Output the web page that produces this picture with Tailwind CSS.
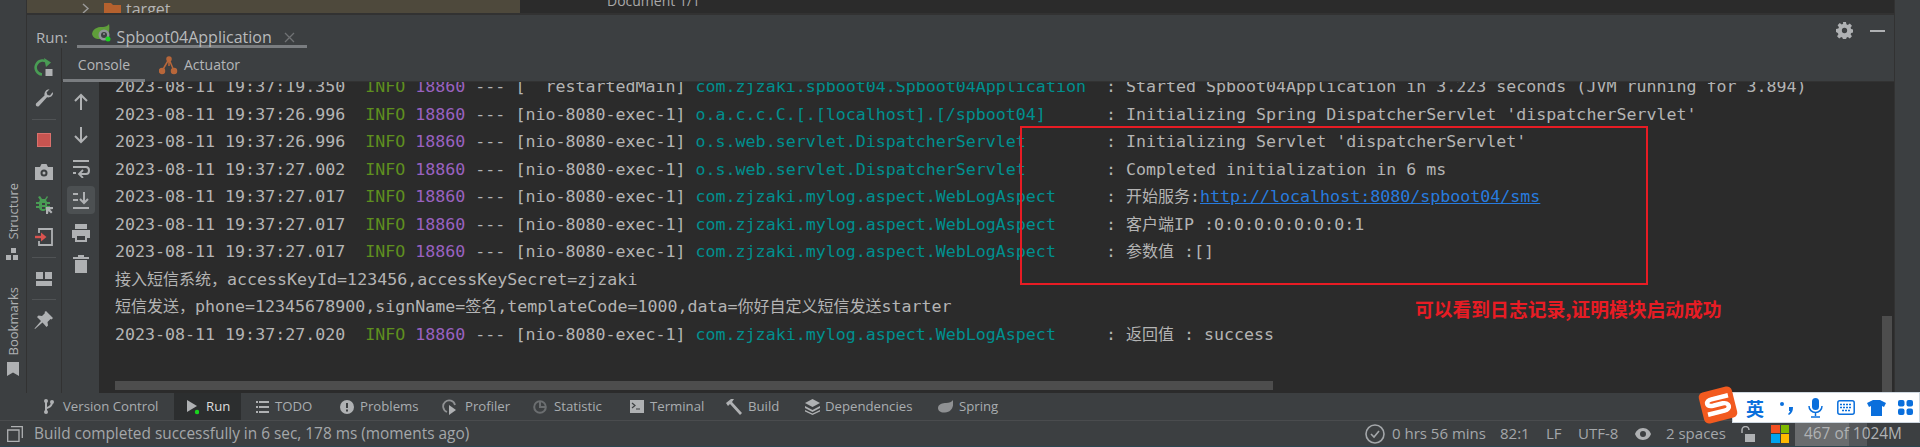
<!DOCTYPE html>
<html lang="zh-CN">
<head>
<meta charset="utf-8">
<title>Spboot04Application</title>
<script src="https://cdn.jsdelivr.net/npm/@tailwindcss/browser@4"></script>
</head>
<body class="m-0 bg-[#3c3f41]">
<div class="relative w-[1920px] h-[447px] overflow-hidden bg-[#3c3f41] flex flex-col font-['Open_Sans','Noto_Sans_CJK_SC',sans-serif] text-[#afb1b3]">

  <!-- upper workspace -->
  <div class="flex h-[393px] shrink-0">
    <!-- left strip -->
    <div class="w-[27px] shrink-0 border-r border-[#323232] flex flex-col items-center">
      <div class="h-[183px] shrink-0"></div>
      <div class="h-[57px] w-[20px] flex items-center justify-center"><span class="[writing-mode:vertical-rl] rotate-180 text-[13px] leading-[20px] whitespace-nowrap">Structure</span></div>
      <svg class="mt-[8px]" width="14" height="12" viewBox="0 0 14 12" fill="#afb1b3"><rect x="5" y="0" width="5" height="5"/><rect x="0" y="7" width="5" height="5"/><rect x="7" y="7" width="5" height="5"/></svg>
      <div class="mt-[28px] h-[67px] w-[20px] flex items-center justify-center"><span class="[writing-mode:vertical-rl] rotate-180 text-[13px] leading-[20px] whitespace-nowrap">Bookmarks</span></div>
      <svg class="mt-[7px]" width="12" height="14" viewBox="0 0 12 14" fill="#afb1b3"><path d="M0 0h12v14L6 10.5 0 14z"/></svg>
    </div>

    <!-- main column -->
    <div class="flex-1 min-w-0 flex flex-col">
      <!-- top clipped row -->
      <div class="h-[13px] shrink-0 flex overflow-hidden text-[15px] leading-[18px]">
        <div class="w-[493px] bg-[#4e493c] flex items-start">
          <svg class="ml-[54px] mt-[3px]" width="9" height="11" viewBox="0 0 9 11" fill="none" stroke="#9a9a9a" stroke-width="1.4"><path d="M2 1l5 4.5L2 10"/></svg>
          <svg class="ml-[14px] mt-[3px]" width="17" height="12" viewBox="0 0 17 12" fill="#b5612e"><path d="M0 0h7l2 2h8v10H0z"/></svg>
          <span class="ml-[5px] text-[#b5b5b5] text-[16px]">target</span>
        </div>
        <div class="flex-1 bg-[#2b2b2b] relative">
          <span class="block ml-[87px] -mt-[8px] text-[#a9a9a9] text-[14px] whitespace-nowrap">Document 1/1</span>
        </div>
      </div>
      <div class="h-[2px] shrink-0 bg-[#323232]"></div>

      <!-- Run header -->
      <div class="h-[33px] shrink-0 flex items-start relative">
        <span class="ml-[9px] mt-[12px] text-[15px] leading-[20px] text-[#b4b6b8]">Run:</span>
        <div class="ml-[9px] w-[230px] h-[33px] border-b-[3px] border-[#7a7d80] flex items-start">
          <svg class="ml-[15px] mt-[8px]" width="19" height="19" viewBox="0 0 19 19">
            <path d="M0 11C1 4 8 4 11 4c2 0 5-1 6-3 1 5 0 10-3 13-3 2-5 2-7 2-3 0-6-1-7-5z" fill="#5f9e3a"/>
            <circle cx="12" cy="12" r="5.5" fill="#8f9497"/><circle cx="12" cy="12" r="3" fill="#3c3f41"/>
            <path d="M12 10v2" stroke="#afb1b3" stroke-width="1"/>
            <circle cx="16" cy="16" r="2.5" fill="#19d31e"/>
          </svg>
          <span class="ml-[6px] mt-[12px] w-[158px] text-[16px] leading-[20px] whitespace-nowrap text-[#b8babc]">Spboot04Application</span>
          <svg class="ml-[9px] mt-[17px]" width="11" height="11" viewBox="0 0 11 11" stroke="#707274" stroke-width="1.3"><path d="M1 1l9 9M10 1l-9 9"/></svg>
        </div>
        <div class="ml-auto mt-[7px] flex items-center">
          <svg width="17" height="17" viewBox="0 0 16 16" fill="#afb1b3"><path fill-rule="evenodd" d="M6.6 0h2.8l.4 2.2 1.3.6 1.9-1.3 2 2-1.3 1.900.6 1.300 2.200.4v2.800l-2.200.4-.6 1.300 1.300 1.900-2 2-1.900-1.300-1.300.6-.4 2.200H6.600l-.4-2.200-1.300-.6L3 15.500l-2-2 1.300-1.900-.6-1.300L0 9.400V6.600l2.200-.4.6-1.300L1.500 3l2-2 1.900 1.300 1.300-.6zM8 5.500a2.500 2.500 0 100 5 2.500 2.500 0 000-5z"/></svg>
          <div class="ml-[17px] mr-[9px] w-[15px] h-[2px] bg-[#afb1b3]"></div>
        </div>
      </div>

      <!-- body -->
      <div class="flex-1 min-h-0 flex">
        <!-- action col 1 -->
        <div class="w-[35px] shrink-0 border-r border-[#323232] flex flex-col items-center">
          <svg class="mt-[9px]" width="20" height="20" viewBox="0 0 20 20" fill="none"><path d="M8 17.500A7 7 0 1 1 14 6" stroke="#499c54" stroke-width="2.600"/><path d="M10 1l7 4.500-5 4.500z" fill="#499c54"/><rect x="11.500" y="12" width="7" height="7" fill="#afb1b3"/></svg>
          <svg class="mt-[11px]" width="20" height="20" viewBox="0 0 20 20" fill="#afb1b3"><path d="M19 5c0 3-3 5-6 4.300L5 18c-1.500 1.500-4 0-3-2.500l8.500-8C10 4 12.500 1 15.500 1.200L12.500 4.500l1 2.500 2.500.5L18.500 4.300z"/></svg>
          <div class="mt-[11px] w-[24px] h-px bg-[#505355]"></div>
          <div class="mt-[10px] h-[20px] flex items-center"><div class="w-[14px] h-[14px] bg-[#c75450] border border-[#d9716d]"></div></div>
          <svg class="mt-[12px]" width="20" height="20" viewBox="0 0 20 20" fill="#afb1b3"><path fill-rule="evenodd" d="M1 5h5l1.500-3h5L14 5h5v13H1zM10 7.500a3.500 3.500 0 100 7 3.500 3.500 0 000-7zM10 9.500a1.500 1.500 0 110 3 1.500 1.500 0 010-3z"/></svg>
          <svg class="mt-[13px]" width="20" height="20" viewBox="0 0 20 20"><path fill="#499c54" d="M6 1l2 3h3l2-3 1 1-2 3 1 2h3v2h-3v2h3v2h-3l-1 2-2 1-2 0-2-1-1-2H2v-2h3V9H2V7h3l1-2-2-3z"/><path fill="#3c3f41" d="M8 8h3v2H8zM8 12h3v2H8z"/><path fill="#afb1b3" d="M12 12h7v2l-3 .5 2.500 2.500-1.500 1.500-2.500-2.500-.5 3h-2z"/></svg>
          <svg class="mt-[12px]" width="20" height="20" viewBox="0 0 20 20" fill="none"><path d="M5 6V2h13v16H5v-4" stroke="#afb1b3" stroke-width="1.800"/><path d="M1 10h8" stroke="#d9534f" stroke-width="2.400"/><path d="M7 5.500l5.500 4.500L7 14.500z" fill="#d9534f"/></svg>
          <div class="mt-[10px] w-[24px] h-px bg-[#505355]"></div>
          <svg class="mt-[11px]" width="20" height="20" viewBox="0 0 20 20" fill="#afb1b3"><path d="M2 3h7v7H2zM11 3h7v7h-7zM2 12h16v5H2z"/></svg>
          <div class="mt-[10px] w-[24px] h-px bg-[#505355]"></div>
          <svg class="mt-[10px]" width="20" height="20" viewBox="0 0 20 20" fill="#afb1b3"><path d="M12 1l7 7-1.500 1.500-1-.5-3 3 .5 3.500L12.500 17 8.500 12.500 1 19l-.5-.5L7 11 3 7l1.500-1.500L8 6l3-3-.5-1z"/></svg>
        </div>

        <!-- right of col 1 -->
        <div class="flex-1 min-w-0 flex flex-col">
          <!-- console tabs -->
          <div class="h-[34px] shrink-0 flex items-start border-b border-[#323232] relative">
            <div class="ml-[1px] w-[82px] h-[34px] border-b-[3px] border-[#7a7d80] flex justify-center"><span class="mt-[7px] text-[14px] leading-[20px] text-[#b4b6b8]">Console</span></div>
            <svg class="ml-[14px] mt-[8px]" width="19" height="19" viewBox="0 0 19 19" fill="#b8673a" stroke="#b8673a" stroke-width="1.500"><path d="M10 3L3 15M10 3l5 12M10 3v7" fill="none"/><circle cx="10" cy="3" r="2" /><circle cx="3" cy="15" r="2.500"/><circle cx="15" cy="15" r="2.500"/></svg>
            <span class="ml-[6px] mt-[7px] text-[14px] leading-[20px] text-[#b4b6b8]">Actuator</span>
          </div>

          <div class="flex-1 min-h-0 flex">
            <!-- action col 2 -->
            <div class="w-[37px] shrink-0 flex flex-col items-center">
              <svg class="mt-[10px]" width="20" height="20" viewBox="0 0 20 20" fill="none" stroke="#afb1b3" stroke-width="2"><path d="M10 18V3M4 9l6-6 6 6"/></svg>
              <svg class="mt-[13px]" width="20" height="20" viewBox="0 0 20 20" fill="none" stroke="#afb1b3" stroke-width="2"><path d="M10 2v15M4 11l6 6 6-6"/></svg>
              <svg class="mt-[13px]" width="20" height="20" viewBox="0 0 20 20" fill="none" stroke="#afb1b3" stroke-width="2"><path d="M2 3h16M2 9h13c4 0 4 7 0 7H9M2 15h3"/><path d="M12 12l-4 4 4 4" stroke-width="1.800"/></svg>
              <div class="mt-[8px] w-[28px] h-[28px] rounded-[4px] bg-[#4c5052] flex items-center justify-center">
                <svg width="20" height="20" viewBox="0 0 20 20" fill="none" stroke="#afb1b3" stroke-width="2"><path d="M2 4h5M2 10h5M2 18h16M13 2v11M9 9l4 4 4-4"/></svg>
              </div>
              <svg class="mt-[9px]" width="20" height="20" viewBox="0 0 20 20" fill="#afb1b3"><path fill-rule="evenodd" d="M4 1h12v5H4zM1 7h18v8h-3v4H4v-4H1zM6 13v4h8v-4z"/></svg>
              <svg class="mt-[11px]" width="20" height="20" viewBox="0 0 20 20" fill="#afb1b3"><path d="M7 1h6v2h5v2H2V3h5zM4 6h12v13H4z"/></svg>
            </div>

            <!-- console -->
            <div class="flex-1 min-w-0 relative bg-[#2b2b2b] overflow-hidden">
              <div class="ml-[16px] -mt-[9px] font-['DejaVu_Sans_Mono','Noto_Sans_CJK_SC',monospace] text-[16.64px] text-[#b4b4b4]">
                <div class="h-[27.5px] leading-[27.5px] whitespace-pre">2023-08-11 19:37:19.350  <span class="text-[#5f8f1f]">INFO</span> <span class="text-[#9a62c0]">18860</span> --- [  restartedMain] <span class="text-[#00908f]">com.zjzaki.spboot04.Spboot04Application</span>  : Started Spboot04Application in 3.223 seconds (JVM running for 3.894)</div>
                <div class="h-[27.5px] leading-[27.5px] whitespace-pre">2023-08-11 19:37:26.996  <span class="text-[#5f8f1f]">INFO</span> <span class="text-[#9a62c0]">18860</span> --- [nio-8080-exec-1] <span class="text-[#00908f]">o.a.c.c.C.[.[localhost].[/spboot04]</span>      : Initializing Spring DispatcherServlet 'dispatcherServlet'</div>
                <div class="h-[27.5px] leading-[27.5px] whitespace-pre">2023-08-11 19:37:26.996  <span class="text-[#5f8f1f]">INFO</span> <span class="text-[#9a62c0]">18860</span> --- [nio-8080-exec-1] <span class="text-[#00908f]">o.s.web.servlet.DispatcherServlet</span>        : Initializing Servlet 'dispatcherServlet'</div>
                <div class="h-[27.5px] leading-[27.5px] whitespace-pre">2023-08-11 19:37:27.002  <span class="text-[#5f8f1f]">INFO</span> <span class="text-[#9a62c0]">18860</span> --- [nio-8080-exec-1] <span class="text-[#00908f]">o.s.web.servlet.DispatcherServlet</span>        : Completed initialization in 6 ms</div>
                <div class="h-[27.5px] leading-[27.5px] whitespace-pre">2023-08-11 19:37:27.017  <span class="text-[#5f8f1f]">INFO</span> <span class="text-[#9a62c0]">18860</span> --- [nio-8080-exec-1] <span class="text-[#00908f]">com.zjzaki.mylog.aspect.WebLogAspect</span>     : <span class="text-[16px]">开始服务</span>:<span class="text-[#287bde] underline">http://localhost:8080/spboot04/sms</span></div>
                <div class="h-[27.5px] leading-[27.5px] whitespace-pre">2023-08-11 19:37:27.017  <span class="text-[#5f8f1f]">INFO</span> <span class="text-[#9a62c0]">18860</span> --- [nio-8080-exec-1] <span class="text-[#00908f]">com.zjzaki.mylog.aspect.WebLogAspect</span>     : <span class="text-[16px]">客户端</span>IP :0:0:0:0:0:0:0:1</div>
                <div class="h-[27.5px] leading-[27.5px] whitespace-pre">2023-08-11 19:37:27.017  <span class="text-[#5f8f1f]">INFO</span> <span class="text-[#9a62c0]">18860</span> --- [nio-8080-exec-1] <span class="text-[#00908f]">com.zjzaki.mylog.aspect.WebLogAspect</span>     : <span class="text-[16px]">参数值</span> :[]</div>
                <div class="h-[27.5px] leading-[27.5px] whitespace-pre"><span class="text-[16px]">接入短信系统，</span>accessKeyId=123456,accessKeySecret=zjzaki</div>
                <div class="h-[27.5px] leading-[27.5px] whitespace-pre"><span class="text-[16px]">短信发送，</span>phone=12345678900,signName=<span class="text-[16px]">签名</span>,templateCode=1000,data=<span class="text-[16px]">你好自定义短信发送</span>starter</div>
                <div class="h-[27.5px] leading-[27.5px] whitespace-pre">2023-08-11 19:37:27.020  <span class="text-[#5f8f1f]">INFO</span> <span class="text-[#9a62c0]">18860</span> --- [nio-8080-exec-1] <span class="text-[#00908f]">com.zjzaki.mylog.aspect.WebLogAspect</span>     : <span class="text-[16px]">返回值</span> : success</div>
              </div>
              <!-- scrollbars -->
              <div class="absolute left-[16px] top-[299px] w-[1158px] h-[9px] bg-[#4d4d4d]"></div>
              <div class="absolute right-[2px] top-[234px] w-[10px] h-[77px] bg-[#4d4d4d]"></div>
            </div>
          </div>
        </div>
      </div>
    </div>

    <!-- right strip -->
    <div class="w-[26px] shrink-0 border-l border-[#323232]"></div>
  </div>

  <!-- tool window bar -->
  <div class="h-[28px] shrink-0 flex items-stretch border-b border-[#4a4c4e] text-[13.2px] text-[#a9adb0] whitespace-nowrap">
    <div class="ml-[44px] flex items-center"><svg width="10" height="15" viewBox="0 0 10 15" fill="#afb1b3"><circle cx="2" cy="2" r="2"/><circle cx="8" cy="3" r="2"/><circle cx="2" cy="13" r="2"/><path d="M1 2h2v11H1z"/><path d="M7 3h2c0 4-3 6-6 7V8c2-1 4-2 4-5z"/></svg><span class="ml-[9px] w-[96px]">Version Control</span></div>
    <div class="ml-[15px] w-[67px] bg-[#2c2e2f] flex items-center pl-[13px] text-[#dcdcdc]"><svg width="12" height="16" viewBox="0 0 12 16"><path d="M0 1l10 6-10 6z" fill="#afb1b3"/><circle cx="10" cy="13" r="2.200" fill="#19d31e"/></svg><span class="ml-[7px]">Run</span></div>
    <div class="ml-[15px] flex items-center"><svg width="13" height="12" viewBox="0 0 13 12" fill="#afb1b3"><path d="M0 0h2v2H0zM3 0h10v2H3zM0 5h2v2H0zM3 5h10v2H3zM0 10h2v2H0zM3 10h10v2H3z"/></svg><span class="ml-[6px] w-[38px]">TODO</span></div>
    <div class="ml-[27px] flex items-center"><svg width="14" height="14" viewBox="0 0 14 14"><circle cx="7" cy="7" r="7" fill="#afb1b3"/><path d="M6 3h2v5H6zM6 9.500h2v2H6z" fill="#3c3f41"/></svg><span class="ml-[6px] w-[57px]">Problems</span></div>
    <div class="ml-[25px] flex items-center"><svg width="15" height="16" viewBox="0 0 15 16" fill="none"><path d="M5 13A6 6 0 1 1 13 6" stroke="#8f9193" stroke-width="1.800"/><path d="M7 6l7 5-7 5z" fill="#afb1b3"/></svg><span class="ml-[8px] w-[43px]">Profiler</span></div>
    <div class="ml-[25px] flex items-center"><svg width="14" height="14" viewBox="0 0 14 14" fill="none" stroke="#6b6e70" stroke-width="2"><circle cx="7" cy="7" r="5.800"/><path d="M7 1v6h6"/></svg><span class="ml-[7px] w-[49px]">Statistic</span></div>
    <div class="ml-[27px] flex items-center"><svg width="14" height="13" viewBox="0 0 14 13"><rect width="14" height="13" fill="#afb1b3"/><path d="M2 3l3 2.500L2 8M6 9h4" stroke="#3c3f41" fill="none" stroke-width="1.200"/></svg><span class="ml-[6px] w-[52px]">Terminal</span></div>
    <div class="ml-[24px] flex items-center"><svg width="16" height="16" viewBox="0 0 16 16" fill="#afb1b3"><path d="M0 4l5-4h3L6 3l10 11-2 2L4 5 2 7z"/></svg><span class="ml-[6px] w-[30px]">Build</span></div>
    <div class="ml-[27px] flex items-center"><svg width="15" height="16" viewBox="0 0 15 16" fill="#afb1b3"><path d="M7.500 0L15 4l-7.500 4L0 4z"/><path d="M0 7l7.500 4L15 7v2l-7.500 4L0 9zM0 11l7.500 3.500L15 11v1.500L7.500 16 0 12.500z"/></svg><span class="ml-[5px] w-[86px]">Dependencies</span></div>
    <div class="ml-[27px] flex items-center"><svg width="15" height="13" viewBox="0 0 15 13" fill="#8f9193"><path d="M15 0c1 6-1 12-8 12.500C3 13 0 11 0 8c0-4 5-5 8-5 3 0 6-1 7-3z"/></svg><span class="ml-[6px] w-[40px]">Spring</span></div>
  </div>

  <!-- status bar -->
  <div class="flex-1 flex items-center border-b border-[#2a4650] text-[15.4px] text-[#a4a7aa] whitespace-nowrap">
    <svg class="ml-[7px]" width="16" height="16" viewBox="0 0 16 16" fill="none" stroke="#afb1b3" stroke-width="1.300"><path d="M4 .7h11.300V12M.7 4h11.300v11.300H.7z"/></svg>
    <span class="ml-[11px] w-[441px] text-[#a4a7aa]">Build completed successfully in 6 sec, 178 ms (moments ago)</span>
    <div class="ml-auto flex items-center h-full">
      <svg width="20" height="20" viewBox="0 0 20 20" fill="none" stroke="#a4a7aa" stroke-width="1.600"><circle cx="10" cy="10" r="9"/><path d="M6 10l3 3 5-6"/></svg>
      <span class="ml-[7px] w-[95px] text-[15px]">0 hrs 56 mins</span>
      <span class="ml-[13px] w-[29px] text-[15px]">82:1</span>
      <span class="ml-[17px] w-[16px] text-[15px]">LF</span>
      <span class="ml-[16px] w-[42px] text-[15px]">UTF-8</span>
      <svg class="ml-[15px]" width="16" height="12" viewBox="0 0 16 12"><path fill-rule="evenodd" fill="#afb1b3" d="M8 0c4 0 7 3 8 6-1 3-4 6-8 6S1 9 0 6c1-3 4-6 8-6zm0 3a3 3 0 100 6 3 3 0 000-6z"/></svg>
      <span class="ml-[15px] w-[61px] text-[15px]">2 spaces</span>
      <svg class="ml-[14px]" width="14" height="16" viewBox="0 0 14 16" fill="none"><path d="M1 7V4a3.500 3.500 0 017 0" stroke="#afb1b3" stroke-width="1.500"/><rect x="4" y="8" width="10" height="8" fill="#afb1b3"/></svg>
      <div class="ml-[16px] w-[18px] h-[18px] grid grid-cols-2 gap-px"><div class="bg-[#f25022]"></div><div class="bg-[#7fba00]"></div><div class="bg-[#00a4ef]"></div><div class="bg-[#ffb900]"></div></div>
      <div class="relative ml-[6px] w-[125px] h-full flex">
        <div class="w-[54px] bg-[#6a6c6e]"></div>
        <div class="w-[18px] bg-[#54575a]"></div>
        <span class="absolute left-[9px] inset-y-0 flex items-center text-[#b0b2b4]">467 of 1024M</span>
      </div>
    </div>
  </div>

  <!-- annotation overlay -->
  <div class="absolute left-[1020px] top-[126px] w-[628px] h-[159px] border-2 border-[#e81c24]"></div>
  <div class="absolute left-[1415px] top-[296px] text-[18.8px] leading-[26px] font-bold text-[#e81c24] whitespace-nowrap font-['Noto_Sans_CJK_SC',sans-serif]">可以看到日志记录,证明模块启动成功</div>

  <!-- IME overlay -->
  <div class="absolute left-[1732px] top-[392px] w-[188px] h-[31px] bg-white border border-[#cfd8e0] flex items-center text-[#0a6fdc]">
    <span class="ml-[13px] w-[18px] text-[18px] leading-[20px] font-bold font-['Noto_Sans_CJK_SC',sans-serif]">英</span>
    <span class="ml-[16px] w-[14px] flex items-center"><svg width="14" height="16" viewBox="0 0 14 16" fill="#0a6fdc"><circle cx="2" cy="4" r="2"/><path d="M9 7h4c0 4-1 6-4 8l-1-1c1-1 2-2 2-3H9z"/></svg></span>
    <svg class="ml-[14px]" width="15" height="20" viewBox="0 0 15 20" fill="#0a6fdc"><rect x="4" y="0" width="7" height="12" rx="3.500"/><path d="M1 8a6.500 6.500 0 0013 0M7.500 15v3M3 19h9" fill="none" stroke="#0a6fdc" stroke-width="1.500"/></svg>
    <svg class="ml-[14px]" width="18" height="15" viewBox="0 0 18 15" fill="none" stroke="#0a6fdc" stroke-width="1.500"><rect x=".8" y=".8" width="16.400" height="13.400" rx="2"/><path d="M3 4.500h12M3 7.500h12M5 10.500h8" stroke-dasharray="2 1"/></svg>
    <svg class="ml-[12px]" width="19" height="16" viewBox="0 0 19 16" fill="#0a6fdc"><path d="M6 0h7l6 3-2 4-2-1v10H4V6L2 7 0 3z"/></svg>
    <svg class="ml-[12px]" width="15" height="15" viewBox="0 0 15 15" fill="#0a6fdc"><rect width="6.500" height="6.500" rx="2"/><rect x="8.500" width="6.500" height="6.500" rx="2"/><rect y="8.500" width="6.500" height="6.500" rx="2"/><rect x="8.500" y="8.500" width="6.500" height="6.500" rx="2"/></svg>
  </div>
  <div class="absolute left-[1701px] top-[389px] w-[34px] h-[32px] rounded-[5px] bg-[#f25a1f] -rotate-[14deg] flex items-center justify-center overflow-hidden">
    <svg width="28" height="20" viewBox="0 0 28 20" fill="none" stroke="#fff" stroke-width="4.500"><path d="M26 3H9C2 3 2 9 9 9.500h10c7 .5 7 7.500 0 7.500H2"/></svg>
  </div>
</div>
</body>
</html>
